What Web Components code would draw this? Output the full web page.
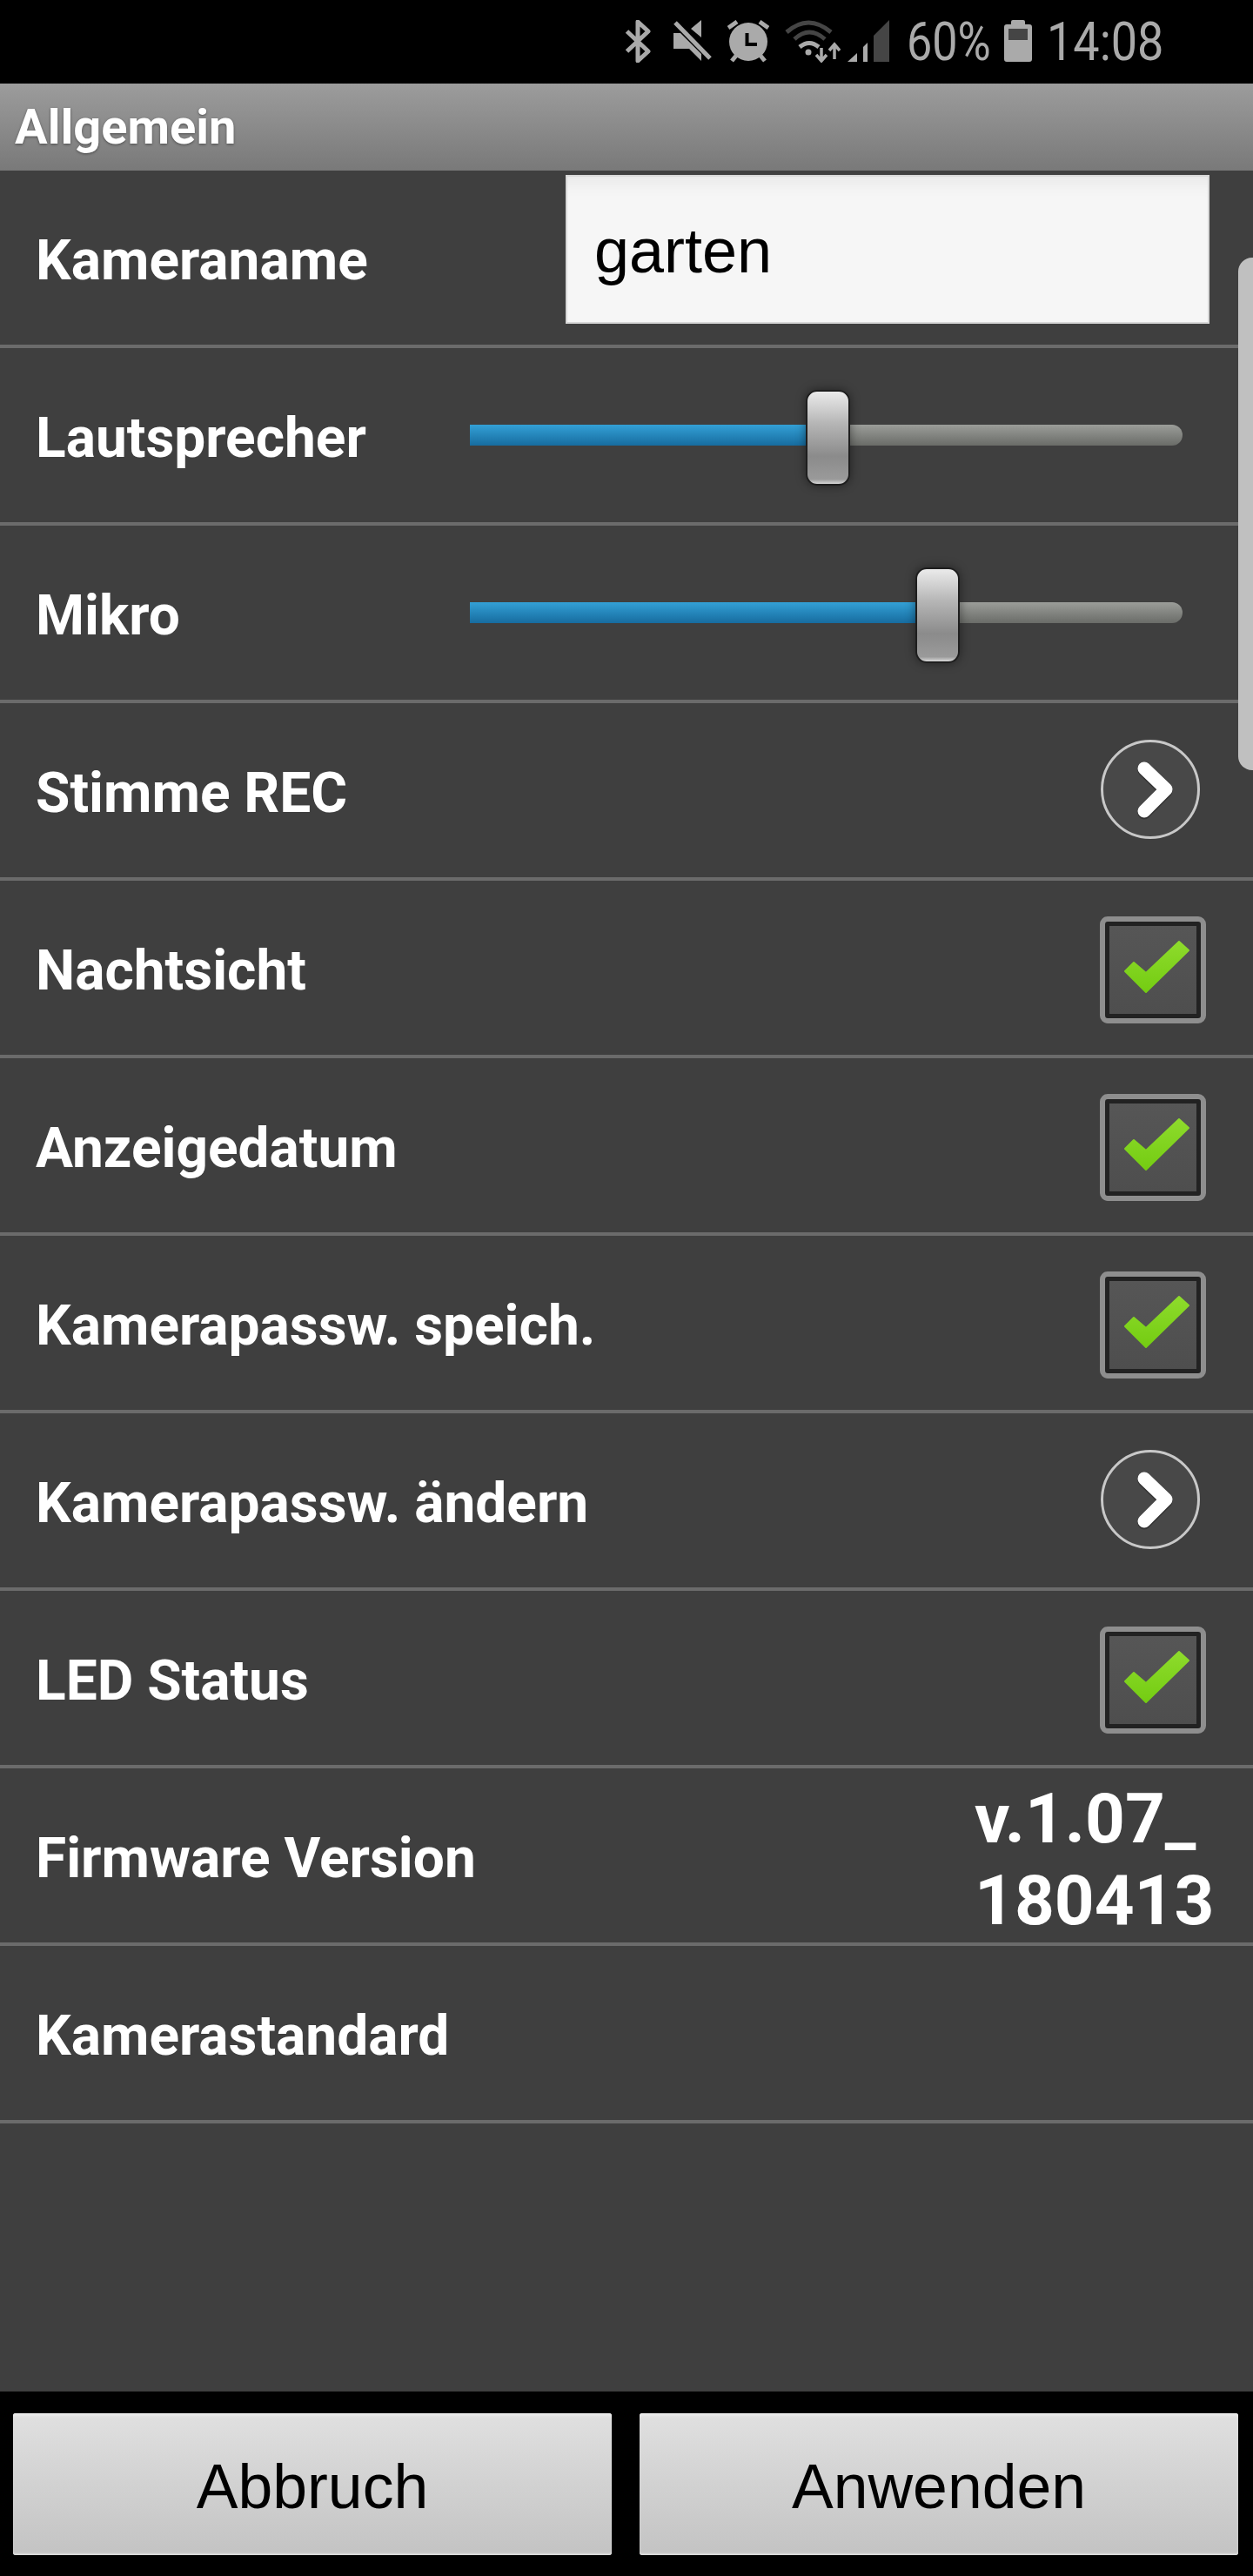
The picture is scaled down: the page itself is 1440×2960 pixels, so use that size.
<!DOCTYPE html>
<html lang="de">
<head>
<meta charset="utf-8">
<title>Allgemein</title>
<style>
html,body{margin:0;padding:0;background:#000}
body{width:1440px;height:2960px;font-family:Roboto,"Liberation Sans",sans-serif}
app-shell{width:1440px;height:2960px}
</style>
</head>
<body>
<app-shell>
  <status-bar slot="status"></status-bar>
  <section-header slot="header">Allgemein</section-header>

  <setting-row>
    Kameraname
    <text-field slot="control">garten</text-field>
  </setting-row>
  <setting-row>
    Lautsprecher
    <volume-slider slot="control" pos="386"></volume-slider>
  </setting-row>
  <setting-row>
    Mikro
    <volume-slider slot="control" pos="512"></volume-slider>
  </setting-row>
  <setting-row>
    Stimme REC
    <arrow-button slot="control"></arrow-button>
  </setting-row>
  <setting-row>
    Nachtsicht
    <check-box slot="control"></check-box>
  </setting-row>
  <setting-row>
    Anzeigedatum
    <check-box slot="control"></check-box>
  </setting-row>
  <setting-row>
    Kamerapassw. speich.
    <check-box slot="control"></check-box>
  </setting-row>
  <setting-row>
    Kamerapassw. ändern
    <arrow-button slot="control"></arrow-button>
  </setting-row>
  <setting-row>
    LED Status
    <check-box slot="control"></check-box>
  </setting-row>
  <setting-row>
    Firmware Version
    <version-text slot="control">v.1.07_<br>180413</version-text>
  </setting-row>
  <setting-row>Kamerastandard</setting-row>

  <push-button slot="footer">Abbruch</push-button>
  <push-button slot="footer">Anwenden</push-button>
</app-shell>

<script>
// small helper so every element has the same render step
class baseElement extends HTMLElement{
    constructor(){
        super()
        this.attachShadow({mode:'open'})
    }

    getTemplate(){
        const template = document.createElement("template")
        template.innerHTML = this.markup()
        return template
    }

    connectedCallback(){
        this.shadowRoot.append(this.getTemplate().content.cloneNode(true))
    }
}

class appShell extends baseElement{
    markup(){
        return `
        <style>
            :host{display:flex;flex-direction:column;background:#000}
            main{position:relative;flex:1;background:#3f3f3f;display:flex;flex-direction:column}
            .scrollbar{position:absolute;right:0;top:100px;width:17px;height:589px;background:#c0c0c0;border-radius:16px 0 0 16px}
            footer{height:163px;padding:25px 17px 24px 15px;display:flex;gap:32px;background:#000}
        </style>
        <slot name="status"></slot>
        <slot name="header"></slot>
        <main>
            <slot></slot>
            <div class="scrollbar"></div>
        </main>
        <footer><slot name="footer"></slot></footer>
        `
    }
}

class statusBar extends baseElement{
    markup(){
        return `
        <style>
            :host{display:flex;height:96px;background:#000;justify-content:flex-start;padding-left:718px;color:#aaa}
            svg{display:block;margin-top:23px;flex:none}
            .txt{flex:none;height:96px;overflow:visible;font:400 62px/96px Roboto,sans-serif;white-space:nowrap}
            .txt span{display:inline-block;transform-origin:0 50%}
        </style>
        <svg width="31" height="49" viewBox="0 0 31 49" style="margin-right:25px">
            <path d="M2.5 13 L27 36 L15 47 V2 L27 13 L2.5 36" fill="none" stroke="#aaa" stroke-width="5" stroke-linejoin="round"/>
        </svg>
        <svg width="45" height="48" viewBox="0 0 45 48" style="margin-right:17px">
            <path d="M32 0V20L20 10ZM0 15H8L32 39V47L18 33H0Z" fill="#aaa"/>
            <path d="M2 3L42 44" stroke="#aaa" stroke-width="5"/>
        </svg>
        <svg width="48" height="49" viewBox="0 0 48 49" style="margin-right:18px">
            <circle cx="24" cy="25" r="22" fill="#aaa"/>
            <path d="M1 9L11 2M37 2L47 9M5 47L10 41M43 47L38 41" stroke="#aaa" stroke-width="5"/>
            <path d="M22.500 15V28H34" fill="none" stroke="#000" stroke-width="4"/>
        </svg>
        <svg width="64" height="49" viewBox="0 0 64 49" style="margin-right:8px">
            <path d="M2 14Q27 -8 53 14" fill="none" stroke="#454545" stroke-width="5"/>
            <path d="M11 22Q28 6 46 22" fill="none" stroke="#454545" stroke-width="5"/>
            <path d="M17 31Q28 22 39 31" fill="none" stroke="#aaa" stroke-width="5"/>
            <circle cx="27" cy="37" r="3.500" fill="#aaa"/>
            <path d="M42 32V46M36 40L42 47L48 40" fill="none" stroke="#aaa" stroke-width="3.500"/>
            <path d="M57 45V29M51 35L57 28L63 35" fill="none" stroke="#aaa" stroke-width="3.500"/>
        </svg>
        <svg width="48" height="48" viewBox="0 0 48 48" style="margin-right:20px">
            <path d="M0 48L11 38V48Z" fill="#aaa"/>
            <path d="M18 48V31L23 26V48Z" fill="#aaa"/>
            <path d="M30 48V18L48 0V48Z" fill="#454545"/>
        </svg>
        <div class="txt" style="width:112px"><span style="transform:scaleX(.84)">60%</span></div>
        <svg width="32" height="48" viewBox="0 0 32 48" style="margin-right:17px">
            <path d="M8 2Q8 0 10 0H22Q24 0 24 2V5H29Q32 5 32 8V45Q32 48 29 48H3Q0 48 0 45V8Q0 5 3 5H8Z" fill="#aaa"/>
            <rect x="5" y="10" width="22" height="13" fill="#454545"/>
        </svg>
        <div class="txt"><span style="transform:scaleX(.87)">14:08</span></div>
        `
    }
}

class sectionHeader extends baseElement{
    markup(){
        return `
        <style>
            :host{display:flex;align-items:center;height:100px;padding-left:17px;color:#fff;
                font:700 56px Roboto,sans-serif;text-shadow:0 1px 3px rgba(0,0,0,.45);
                background:linear-gradient(#9c9c9c,#797979)}
        </style>
        <slot></slot>
        `
    }
}

class settingRow extends baseElement{
    markup(){
        return `
        <style>
            :host{display:flex;height:200px;border-bottom:4px solid #6b6b6b;padding-left:41px;
                color:#fff;font:700 64px Roboto,sans-serif;position:relative}
            .label{flex:1;align-self:center;padding-top:6px;white-space:nowrap}
            .control{display:flex;align-items:center}
        </style>
        <div class="label"><slot></slot></div>
        <div class="control"><slot name="control"></slot></div>
        `
    }
}

class textField extends baseElement{
    markup(){
        return `
        <style>
            :host{display:block;align-self:flex-start;box-sizing:border-box;width:740px;height:171px;margin:5px 50px 0 0;
                padding-left:33px;background:#f6f6f6;color:#000;font:400 72px/174px "Liberation Sans",Arial,sans-serif;
                box-shadow:inset 0 0 0 2px #d8d8d8,inset 0 22px 18px -14px #e6e6e6}
        </style>
        <slot></slot>
        `
    }
}

class volumeSlider extends baseElement{
    markup(){
        const pos = this.getAttribute('pos')
        return `
        <style>
            :host{display:block;position:relative;width:819px;height:110px;margin:6px 81px 0 0}
            .track,.fill{position:absolute;left:0;top:40px;height:24px}
            .track{width:100%;border-radius:0 12px 12px 0;background:linear-gradient(#9b9d99,#6a6c68)}
            .fill{width:${+pos + 10}px;background:linear-gradient(#33a0d6,#176c9f)}
            .thumb{position:absolute;top:0;left:${pos}px;box-sizing:border-box;width:51px;height:110px;border-radius:13px;
                border:2px solid #1e1e1e;background:linear-gradient(#e8e8e8 2%,#b5b5b5 35%,#8b8b8b 70%,#9a9a9a 95%,#d8d8d8);
                box-shadow:0 0 12px rgba(0,0,0,.45)}
        </style>
        <div class="track"></div>
        <div class="fill"></div>
        <div class="thumb"></div>
        `
    }
}

class arrowButton extends baseElement{
    markup(){
        return `
        <style>
            :host{display:block;width:114px;height:114px;margin:0 61px 2px 0}
            svg{display:block}
        </style>
        <svg width="114" height="114" viewBox="0 0 114 114">
            <circle cx="57" cy="57" r="55.500" fill="#484848" stroke="#c8c8c8" stroke-width="3"/>
            <path d="M50 33L75 57L50 82" fill="none" stroke="rgba(0,0,0,.3)" stroke-width="15" stroke-linecap="round" stroke-linejoin="round" transform="translate(0,2)"/>
            <path d="M50 33L75 57L50 82" fill="none" stroke="#fff" stroke-width="15" stroke-linecap="round" stroke-linejoin="round"/>
        </svg>
        `
    }
}

class checkBox extends baseElement{
    markup(){
        return `
        <style>
            :host{display:block;box-sizing:border-box;width:122px;height:123px;margin:4px 54px 0 0;
                border:6px solid #8e8e8e;border-radius:9px;background:#222;padding:5px}
            .in{width:100%;height:100%;background:linear-gradient(#565656,#4e4e4e)}
            svg{display:block}
        </style>
        <div class="in">
            <svg width="100" height="101" viewBox="0 0 100 101">
                <defs><linearGradient id="g" x1="0" y1="0" x2="0" y2="1"><stop offset="0" stop-color="#8edb2c"/><stop offset="1" stop-color="#74cc12"/></linearGradient></defs>
                <path d="M18 52L28 42L42 54L80 18L91 28L42 76Z" fill="url(#g)" stroke="url(#g)" stroke-width="2" stroke-linejoin="round"/>
            </svg>
        </div>
        `
    }
}

class versionText extends baseElement{
    markup(){
        return `
        <style>
            :host{display:block;width:320px;font:700 80px/94px Roboto,sans-serif;white-space:nowrap;margin-top:10px}
        </style>
        <slot></slot>
        `
    }
}

class pushButton extends baseElement{
    markup(){
        return `
        <style>
            :host{display:flex;align-items:center;justify-content:center;box-sizing:border-box;width:688px;height:163px;
                padding-top:4px;color:#000;font:400 71.500px "Liberation Sans",Arial,sans-serif;border-radius:3px;
                background:linear-gradient(#e0e0e0,#c3c3c3);box-shadow:inset 0 5px 3px -2px #ececec,inset 0 -2px 2px #ddd}
        </style>
        <slot></slot>
        `
    }
}

customElements.define('app-shell',appShell)
customElements.define('status-bar',statusBar)
customElements.define('section-header',sectionHeader)
customElements.define('setting-row',settingRow)
customElements.define('text-field',textField)
customElements.define('volume-slider',volumeSlider)
customElements.define('arrow-button',arrowButton)
customElements.define('check-box',checkBox)
customElements.define('version-text',versionText)
customElements.define('push-button',pushButton)
</script>
</body>
</html>
